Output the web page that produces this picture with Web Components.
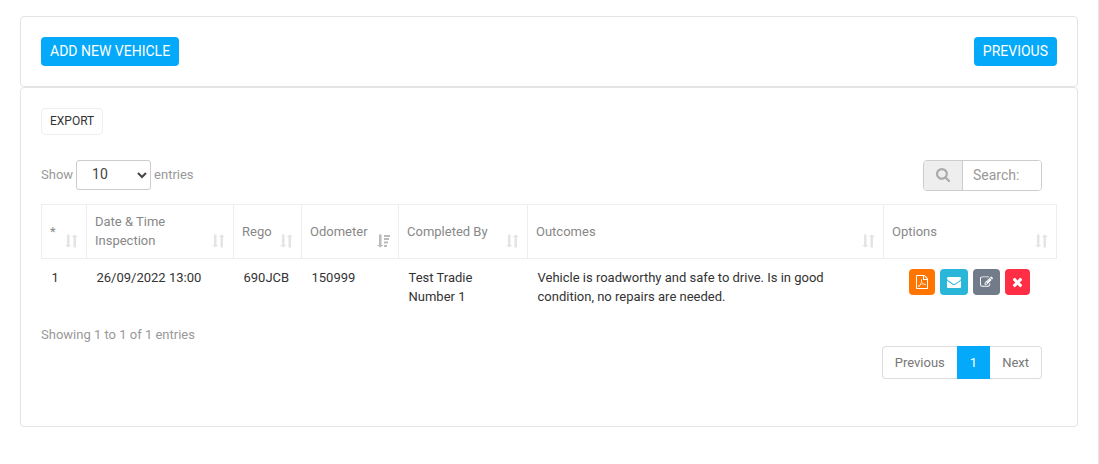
<!DOCTYPE html>
<html lang="en">
<head>
<meta charset="utf-8">
<title>Vehicle inspections</title>
<style>
  body {
    margin: 0;
    background: #fff;
    font-family: Roboto, "Liberation Sans", sans-serif;
    font-size: 13px;
    line-height: 19px;
    color: #999;
  }
</style>
</head>
<body>
<inspection-page></inspection-page>

<script>
const icons = {
  pdf: {
    box: "128 0 1536 1792",
    width: 12,
    path: "M1596 380q28 28 48 76t20 88v1152q0 40-28 68t-68 28h-1344q-40 0-68-28t-28-68v-1600q0-40 28-68t68-28h896q40 0 88 20t76 48zm-444-244v376h376q-10-29-22-41l-313-313q-12-12-41-22zm384 1528v-1024h-416q-40 0-68-28t-28-68v-416h-768v1536h1280zm-514-593q33 26 84 56 59-7 117-7 147 0 177 49 16 22 2 52 0 1-1 2l-2 2v1q-6 38-71 38-48 0-115-20t-130-53q-221 24-392 83-153 262-242 262-15 0-28-7l-24-12q-1-1-6-5-10-10-6-36 9-40 56-91.5t132-96.5q14-9 23 6 2 2 2 4 52-85 107-197 68-136 104-262-24-82-30.5-159.5t6.5-127.5q11-40 42-40h22q23 0 35 15 18 21 9 68-2 6-4 8 1 3 1 8v30q-2 123-14 192 55 164 146 238zm-576 411q52-24 137-158-51 40-87.5 84t-49.5 74zm398-920q-15 42-2 132 1-7 7-44 0-3 7-43 1-4 4-8-1-1-1-2t-1-2-1-2q-1-22-13-36 0 1-1 2v2zm-124 661q135-54 284-81-2-1-13-9.5t-16-13.5q-76-67-127-176-27 86-83 197-30 56-45 83zm646-16q-24-24-140-24 76 28 124 28 14 0 18-1 0-1-2-3z",
  },
  envelope: {
    box: "0 0 1792 1792",
    width: 14,
    path: "M1792 710v794q0 66-47 113t-113 47h-1472q-66 0-113-47t-47-113v-794q44 49 101 87 362 246 497 345 57 42 92.5 65.5t94.5 48 110 24.5h2q51 0 110-24.5t94.5-48 92.5-65.5q170-123 498-345 57-39 100-87zm0-294q0 79-49 151t-122 123q-376 261-468 325-10 7-42.5 31t-54 38-52 32.5-57.5 27-50 9h-2q-23 0-50-9t-57.5-27-52-32.5-54-38-42.5-31q-91-64-262-182.5t-205-142.5q-62-42-117-115.5t-55-136.5q0-78 41.5-130t118.5-52h1472q65 0 112.5 47t47.5 113z",
  },
  edit: {
    box: "0 0 1792 1792",
    width: 13,
    path: "M888 1184l116-116-152-152-116 116v56h96v96h56zm440-720q-16-16-33 1l-350 350q-17 17-1 33t33-1l350-350q17-17 1-33zm80 594v190q0 119-84.5 203.5t-203.5 84.5h-832q-119 0-203.5-84.5t-84.5-203.5v-832q0-119 84.5-203.5t203.5-84.5h832q63 0 117 25 15 7 18 23 3 17-9 29l-49 49q-14 14-32 8-23-6-45-6h-832q-66 0-113 47t-47 113v832q0 66 47 113t113 47h832q66 0 113-47t47-113v-126q0-13 9-22l64-64q15-15 35-7t20 29zm-96-738l288 288-672 672h-288v-288zm444 132l-92 92-288-288 92-92q28-28 68-28t68 28l152 152q28 28 28 68t-28 68z",
  },
  times: {
    box: "192 0 1408 1792",
    width: 11,
    path: "M1490 1322q0 40-28 68l-136 136q-28 28-68 28t-68-28l-294-294-294 294q-28 28-68 28t-68-28l-136-136q-28-28-28-68t28-68l294-294-294-294q-28-28-28-68t28-68l136-136q28-28 68-28t68 28l294 294 294-294q28-28 68-28t68 28l136 136q28 28 28 68t-28 68l-294 294 294 294q28 28 28 68z",
  },
  search: {
    box: "64 128 1664 1664",
    width: 14,
    path: "M1216 832q0-185-131.5-316.5t-316.5-131.5-316.5 131.5-131.5 316.5 131.5 316.5 316.5 131.5 316.5-131.5 131.5-316.5zm512 832q0 52-38 90t-90 38q-54 0-90-38l-343-342q-179 124-399 124-143 0-273.5-55.5t-225-150-150-225-55.5-273.5 55.5-273.5 150-225 225-150 273.5-55.5 273.5 55.5 225 150 150 225 55.5 273.5q0 220-124 399l343 343q37 37 37 90z",
  },
  sort: {
    box: "0 0 13 14",
    width: 13,
    path: "M2 0.500h2.500v10.500h2l-3.250 2.500l-3.250-2.500h2zM8.500 13.500h2.500v-10.500h2l-3.250-2.500l-3.250 2.500h2z",
  },
  sorted: {
    box: "0 0 13 14",
    width: 13,
    path: "M2 0.500h2.500v10.500h2l-3.250 2.500l-3.250-2.500h2zM7 1h6v2h-6zM7 4h5v2h-5zM7 7.500h4v2h-4zM7 11h3v2h-3z",
  },
};

function render(el, html) {
  const template = document.createElement("template");
  template.innerHTML = html;
  el.attachShadow({ mode: "open" }).appendChild(template.content.cloneNode(true));
}

class AppIcon extends HTMLElement {
  connectedCallback() {
    if (this.shadowRoot) return;
    const icon = icons[this.getAttribute("name")];
    render(this, /*html*/ `
      <style>
        :host { display: block; flex: none; }
        svg { display: block; fill: currentColor; }
      </style>
      <svg width="${icon.width}" height="14" viewBox="${icon.box}" aria-hidden="true"><path d="${icon.path}"/></svg>
    `);
  }
}
customElements.define("app-icon", AppIcon);

class AppCard extends HTMLElement {
  constructor() {
    super();
    render(this, /*html*/ `
      <style>
        :host {
          display: block;
          border: 1px solid #e4e4e4;
          border-radius: 4px;
          padding: 20px;
        }
      </style>
      <slot></slot>
    `);
  }
}
customElements.define("app-card", AppCard);

// kind: "primary" (default) or "outline"
class AppButton extends HTMLElement {
  constructor() {
    super();
    render(this, /*html*/ `
      <style>
        :host { display: block; }
        button {
          display: block;
          border: 0;
          border-radius: 4px;
          padding: 5px 9px;
          background: #04a9f9;
          color: #fff;
          font: 14px/19px Roboto, "Liberation Sans", sans-serif;
          text-transform: uppercase;
          cursor: pointer;
        }
        :host([kind="outline"]) button {
          border: 1px solid #eee;
          padding: 3px 8px;
          background: #fff;
          color: #333;
          font-size: 12px;
        }
      </style>
      <button type="button"><slot></slot></button>
    `);
  }
}
customElements.define("app-button", AppButton);

class ActionButton extends HTMLElement {
  connectedCallback() {
    if (this.shadowRoot) return;
    render(this, /*html*/ `
      <style>
        :host { display: block; }
        button {
          display: block;
          border: 0;
          border-radius: 4px;
          padding: 6px 7px;
          background: var(--action-color, #04a9f9);
          color: #fff;
          cursor: pointer;
        }
      </style>
      <button type="button" aria-label="${this.getAttribute("label")}"><app-icon name="${this.getAttribute("icon")}"></app-icon></button>
    `);
  }
}
customElements.define("action-button", ActionButton);

class PageLength extends HTMLElement {
  constructor() {
    super();
    render(this, /*html*/ `
      <style>
        :host { display: block; }
        label { display: flex; align-items: baseline; gap: 3px; }
        select {
          box-sizing: border-box;
          width: 75px;
          height: 30px;
          border: 1px solid #ccc;
          border-radius: 3px;
          padding: 0 0 2px 11px;
          background: #fff;
          color: #444;
          font: 14px Roboto, "Liberation Sans", sans-serif;
        }
      </style>
      <label>
        <span>Show</span>
        <select>
          <option>10</option>
          <option>25</option>
          <option>50</option>
          <option>100</option>
        </select>
        <span>entries</span>
      </label>
    `);
  }
}
customElements.define("page-length", PageLength);

class SearchBox extends HTMLElement {
  constructor() {
    super();
    render(this, /*html*/ `
      <style>
        :host {
          display: flex;
          box-sizing: border-box;
          width: 119px;
          height: 31px;
          border: 1px solid #ccc;
          border-radius: 4px;
          overflow: hidden;
        }
        label {
          display: flex;
          align-items: center;
          padding: 0 12px 2px;
          border-right: 1px solid #ccc;
          background: #eee;
          color: #aaa;
        }
        input {
          flex: 1;
          min-width: 0;
          border: 0;
          outline: 0;
          padding: 0 10px 2px;
          color: #444;
          font: 14px Roboto, "Liberation Sans", sans-serif;
        }
        input::placeholder { color: #999; }
      </style>
      <label for="search" aria-label="Search"><app-icon name="search"></app-icon></label>
      <input id="search" type="text" placeholder="Search:">
    `);
  }
}
customElements.define("search-box", SearchBox);

class SortHeader extends HTMLElement {
  connectedCallback() {
    if (this.shadowRoot) return;
    const name = this.hasAttribute("sorted") ? "sorted" : "sort";
    render(this, /*html*/ `
      <style>
        :host { display: block; }
        button {
          display: flex;
          align-items: center;
          justify-content: space-between;
          box-sizing: border-box;
          width: 100%;
          min-height: 53px;
          border: 0;
          padding: 7px 8px 8px;
          background: none;
          color: #888;
          font: inherit;
          text-align: left;
          cursor: pointer;
        }
        app-icon {
          align-self: flex-end;
          margin-bottom: 2px;
          color: #e4e4e4;
        }
        :host([sorted]) app-icon { color: #bbb; }
      </style>
      <button type="button"><slot></slot><app-icon name="${name}"></app-icon></button>
    `);
  }
}
customElements.define("sort-header", SortHeader);

class VehicleTable extends HTMLElement {
  constructor() {
    super();
    render(this, /*html*/ `
      <style>
        :host { display: block; }
        table {
          width: 100%;
          table-layout: fixed;
          border-collapse: collapse;
        }
        th {
          border: 1px solid #eee;
          padding: 0;
          font-weight: 400;
        }
        td {
          padding: 9px 10px;
          color: #333;
          vertical-align: top;
        }
        .col-index { width: 45px; }
        .col-date { width: 147px; }
        .col-rego { width: 68px; }
        .col-odometer { width: 97px; }
        .col-person { width: 129px; }
        .col-options { width: 173px; }
        .options { padding: 10px 10px 10px 8px; }
        .actions {
          display: flex;
          justify-content: center;
          gap: 5px;
        }
        .pdf { --action-color: #ff7500; }
        .mail { --action-color: #29b6d8; }
        .edit { --action-color: #727b8a; }
        .delete { --action-color: #ff2e44; }
      </style>
      <table>
        <colgroup>
          <col class="col-index">
          <col class="col-date">
          <col class="col-rego">
          <col class="col-odometer">
          <col class="col-person">
          <col>
          <col class="col-options">
        </colgroup>
        <thead>
          <tr>
            <th><sort-header>*</sort-header></th>
            <th><sort-header>Date &amp; Time Inspection</sort-header></th>
            <th><sort-header>Rego</sort-header></th>
            <th aria-sort="descending"><sort-header sorted>Odometer</sort-header></th>
            <th><sort-header>Completed By</sort-header></th>
            <th><sort-header>Outcomes</sort-header></th>
            <th><sort-header>Options</sort-header></th>
          </tr>
        </thead>
        <tbody>
          <tr>
            <td>1</td>
            <td>26/09/2022 13:00</td>
            <td>690JCB</td>
            <td>150999</td>
            <td>Test Tradie Number 1</td>
            <td>Vehicle is roadworthy and safe to drive. Is in good condition, no repairs are needed.</td>
            <td class="options">
              <div class="actions">
                <action-button class="pdf" icon="pdf" label="Download PDF"></action-button>
                <action-button class="mail" icon="envelope" label="Email"></action-button>
                <action-button class="edit" icon="edit" label="Edit"></action-button>
                <action-button class="delete" icon="times" label="Delete"></action-button>
              </div>
            </td>
          </tr>
        </tbody>
      </table>
    `);
  }
}
customElements.define("vehicle-table", VehicleTable);

class TablePager extends HTMLElement {
  constructor() {
    super();
    render(this, /*html*/ `
      <style>
        :host { display: block; }
        nav { display: flex; }
        a {
          border: 1px solid #ddd;
          border-left-width: 0;
          padding: 6px 12px;
          color: #777;
          text-decoration: none;
        }
        a:first-child {
          border-left-width: 1px;
          border-right-width: 0;
          border-radius: 4px 0 0 4px;
        }
        a:last-child { border-radius: 0 4px 4px 0; }
        a[aria-current] {
          border-left-width: 1px;
          border-color: #04a9f9;
          background: #04a9f9;
          color: #fff;
        }
      </style>
      <nav aria-label="Pages">
        <a href="#previous">Previous</a>
        <a href="#1" aria-current="page">1</a>
        <a href="#next">Next</a>
      </nav>
    `);
  }
}
customElements.define("table-pager", TablePager);

class InspectionPage extends HTMLElement {
  constructor() {
    super();
    render(this, /*html*/ `
      <style>
        :host {
          display: block;
          box-sizing: border-box;
          min-height: 100vh;
          border-right: 1px solid #e4e4e4;
          padding: 16px 20px;
        }
        .bar {
          display: flex;
          justify-content: space-between;
        }
        .tools {
          align-items: flex-start;
          margin: 25px 0 13px;
          padding-right: 15px;
        }
        .export { display: flex; }
        .info { margin-top: 10px; }
        .pages {
          display: flex;
          justify-content: flex-end;
          margin-top: 2px;
          padding: 0 15px 27px 0;
        }
      </style>
      <app-card>
        <div class="bar">
          <app-button>Add new vehicle</app-button>
          <app-button>Previous</app-button>
        </div>
      </app-card>
      <app-card>
        <div class="export"><app-button kind="outline">Export</app-button></div>
        <div class="bar tools">
          <page-length></page-length>
          <search-box></search-box>
        </div>
        <vehicle-table></vehicle-table>
        <div class="info">Showing 1 to 1 of 1 entries</div>
        <div class="pages"><table-pager></table-pager></div>
      </app-card>
    `);
  }
}
customElements.define("inspection-page", InspectionPage);
</script>
</body>
</html>
